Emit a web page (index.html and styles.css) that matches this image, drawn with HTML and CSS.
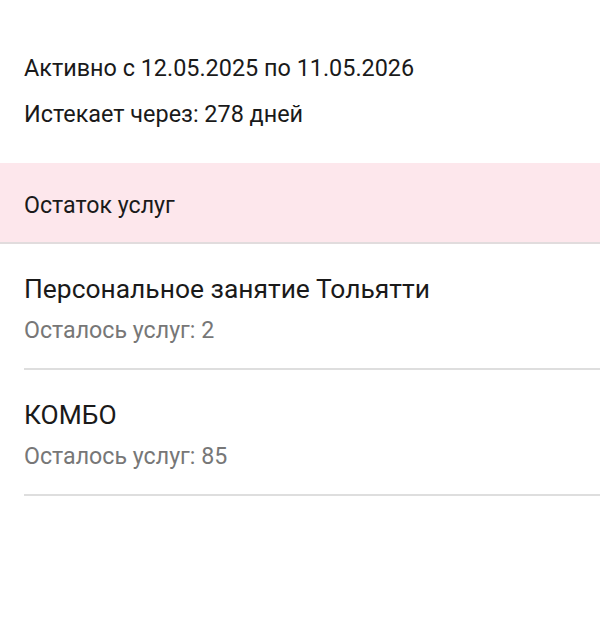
FILE: index.html
```html
<!DOCTYPE html>
<html lang="ru">
<head>
<meta charset="utf-8">
<link rel="stylesheet" href="styles.css">
</head>
<body>
<div class="info">
  <div class="info-line">Активно с 12.05.2025 по 11.05.2026</div>
  <div class="info-line">Истекает через: 278 дней</div>
</div>
<div class="section">Остаток услуг</div>
<div class="list">
  <div class="item">
    <div class="item-title">Персональное занятие Тольятти</div>
    <div class="item-sub">Осталось услуг: 2</div>
  </div>
  <div class="item">
    <div class="item-title">КОМБО</div>
    <div class="item-sub">Осталось услуг: 85</div>
  </div>
</div>
</body>
</html>
```
FILE: styles.css
```css
html, body {
  margin: 0;
  padding: 0;
  background: #ffffff;
}
body {
  font-family: Roboto, "Noto Sans", sans-serif;
  color: #1a1a1a;
  width: 600px;
  height: 630px;
  overflow: hidden;
}
.info {
  padding: 52px 24px 0 24px;
  display: flex;
  flex-direction: column;
  gap: 14px;
}
.info-line {
  font-size: 23.4px;
  line-height: 32px;
}
.section {
  margin-top: 33px;
  height: 79px;
  box-sizing: border-box;
  background: #fde7ec;
  border-bottom: 2px solid #e1dcdd;
  padding: 26px 0 0 24px;
  font-size: 23.2px;
  line-height: 32px;
  height: 81px;
}
.list {
  padding-left: 24px;
}
.item {
  box-sizing: border-box;
  border-bottom: 2px solid #dedede;
  padding: 28px 0 22px 0;
  display: flex;
  flex-direction: column;
  gap: 8px;
}
.item-title {
  font-size: 26.4px;
  line-height: 34px;
  color: #1a1a1a;
}
.item-sub {
  font-size: 23.2px;
  line-height: 32px;
  color: #777777;
}
```
